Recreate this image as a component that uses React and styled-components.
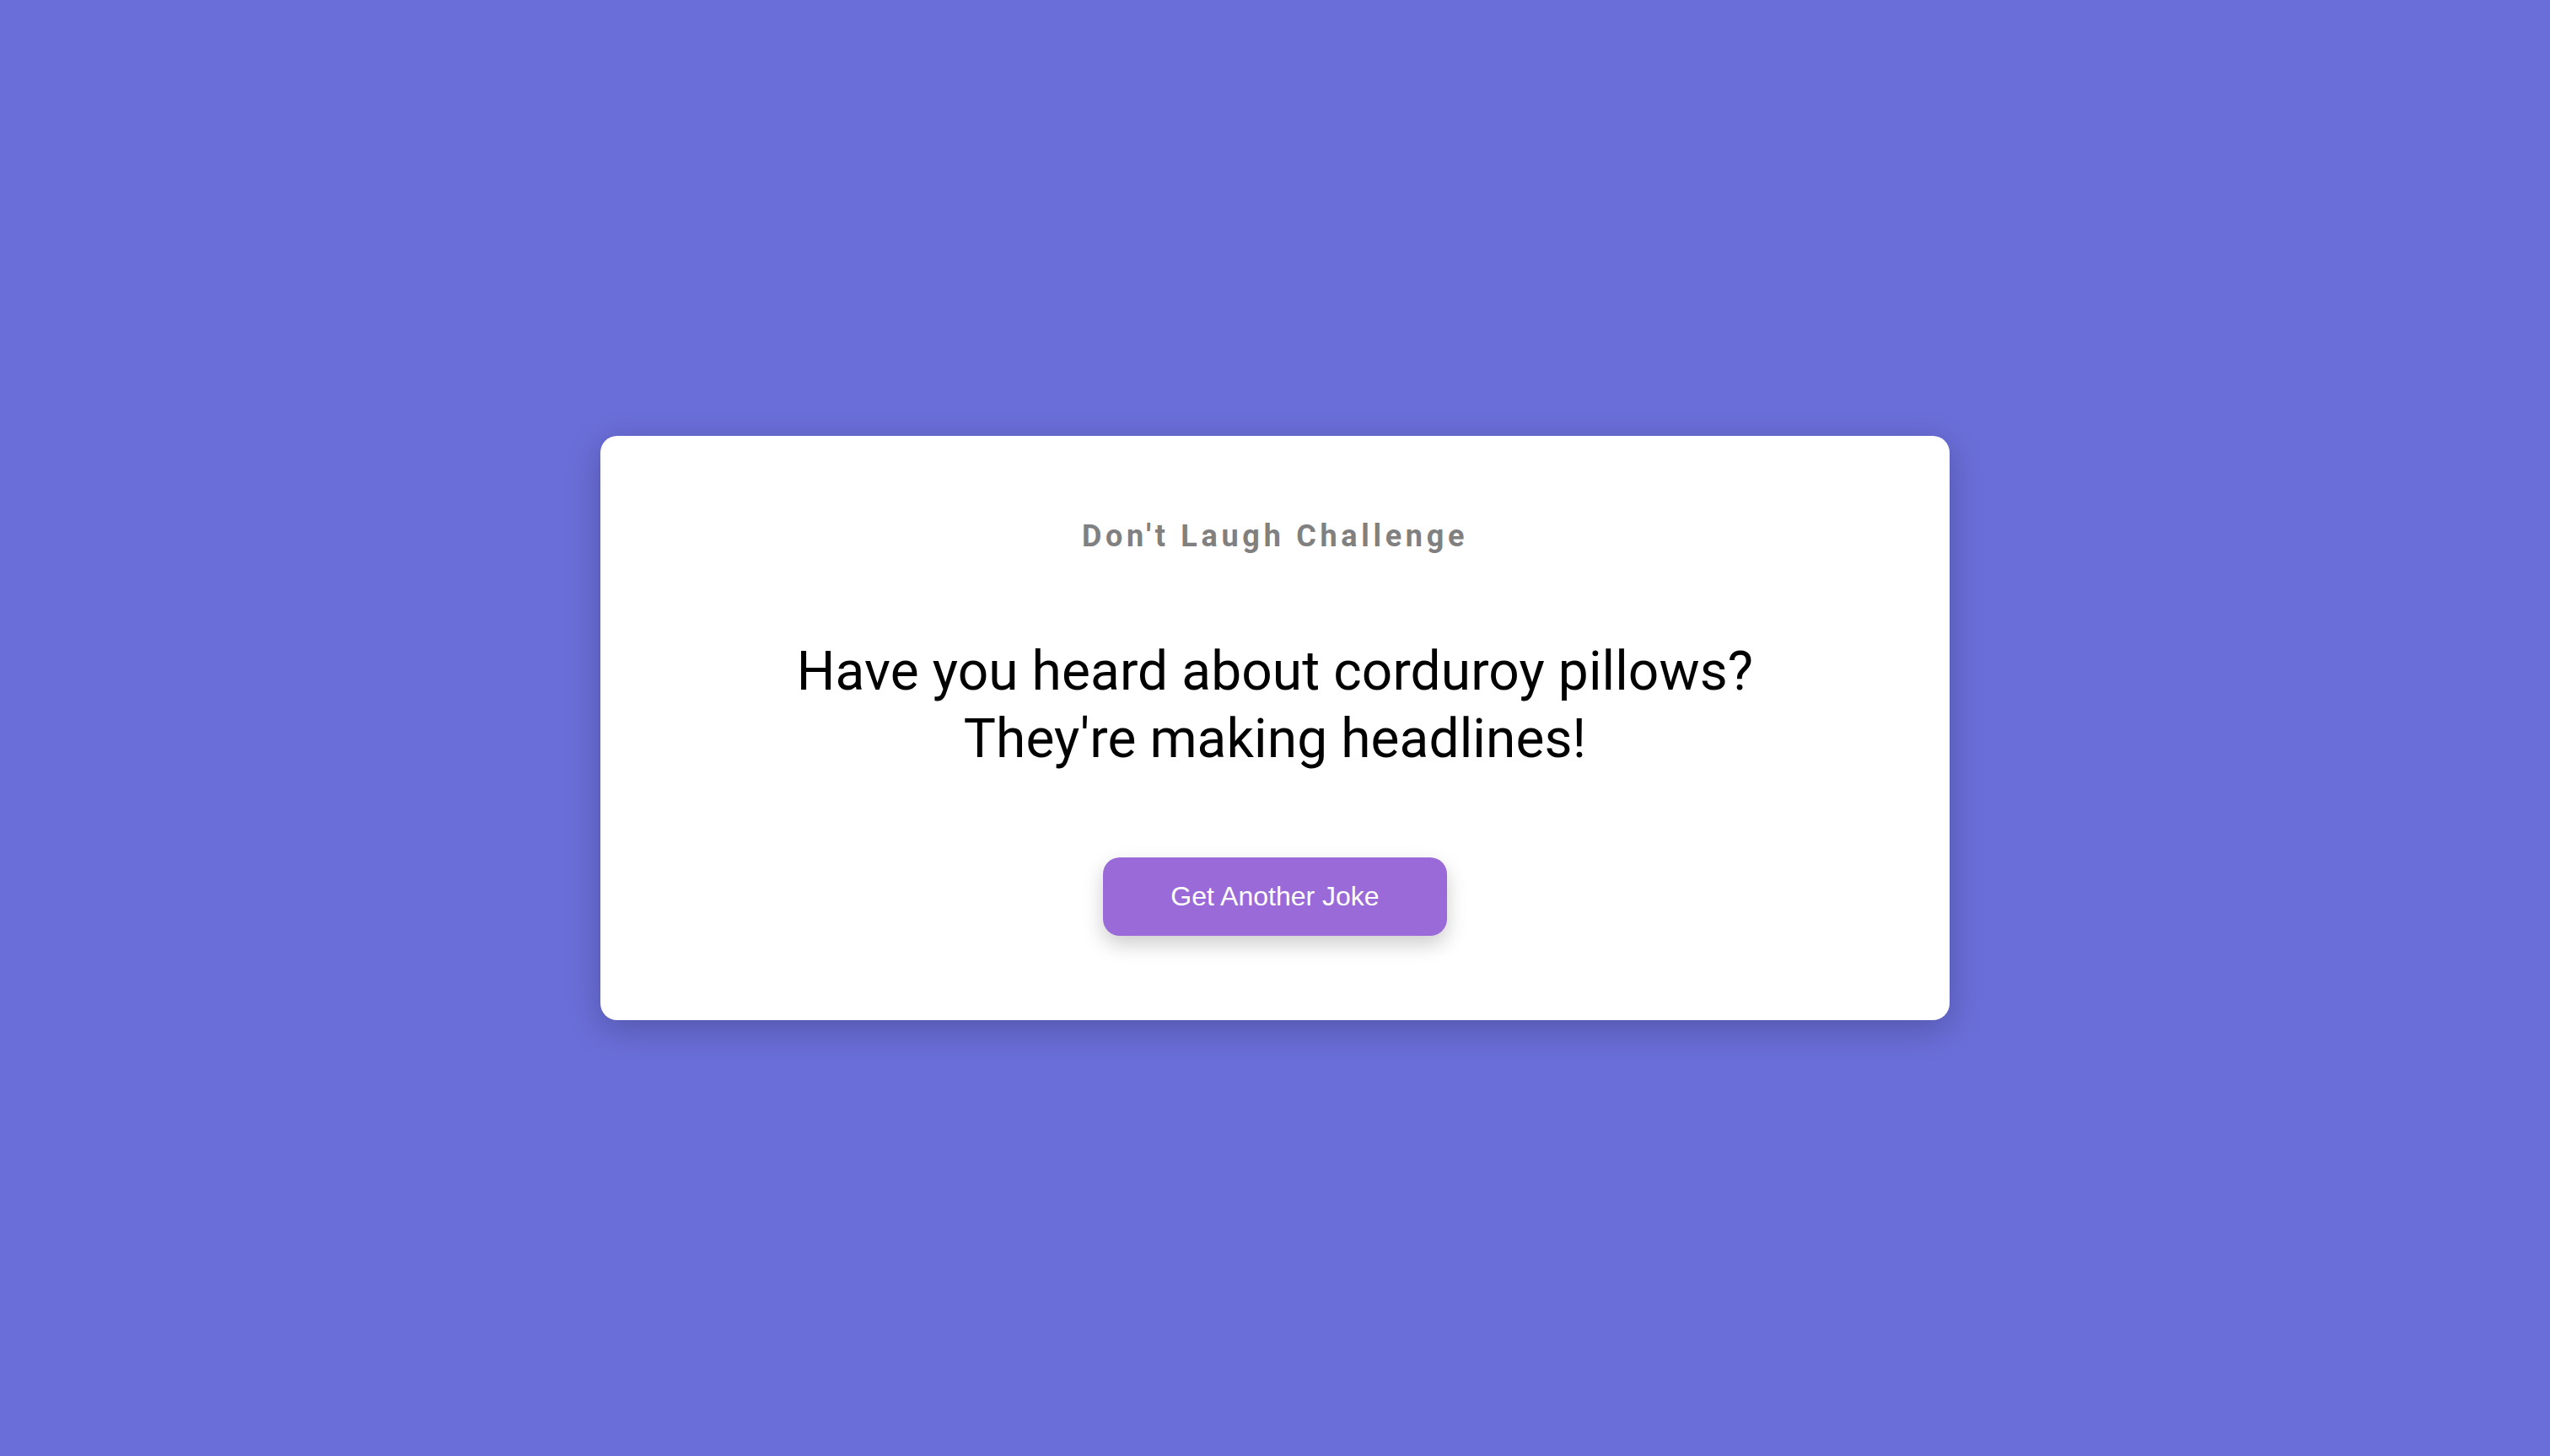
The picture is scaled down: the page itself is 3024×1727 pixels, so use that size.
import styled, { createGlobalStyle } from 'styled-components';

const GlobalStyle = createGlobalStyle`
    html, body {
        margin: 0;
        padding: 0;
    }

    body {
        background-color: #6a6ed8;
        font-family: Roboto, "Liberation Sans", sans-serif;
    }
`;

export default function App() {
    return (
        <>
            <GlobalStyle />
            <Page>
                <Card>
                    <Title>Don't Laugh Challenge</Title>
                    <Joke>
                        Have you heard about corduroy pillows?<br />
                        They're making headlines!
                    </Joke>
                    <JokeButton type="button">Get Another Joke</JokeButton>
                </Card>
            </Page>
        </>
    );
}

const Page = styled.main`
    min-height: 100vh;
    display: flex;
    align-items: center;
    justify-content: center;
`;

const Card = styled.section`
    box-sizing: border-box;
    width: 1600px;
    padding: 98px 40px 100px;
    background-color: #ffffff;
    border-radius: 20px;
    box-shadow: 0 10px 40px rgba(0, 0, 0, 0.22);
    display: flex;
    flex-direction: column;
    align-items: center;
    text-align: center;
`;

const Title = styled.h3`
    margin: 0 0 100px;
    font-family: Roboto, sans-serif;
    font-size: 36px;
    font-weight: 700;
    letter-spacing: 4.7px;
    color: #808080;
`;

const Joke = styled.div`
    margin: 0 0 100px;
    font-family: Roboto, sans-serif;
    font-size: 64px;
    line-height: 80px;
    letter-spacing: 0.1px;
    color: #000000;
`;

const JokeButton = styled.button`
    padding: 28px 80px;
    border: none;
    border-radius: 20px;
    background-color: #9a6bd8;
    color: #ffffff;
    font-family: "Liberation Sans", Arial, sans-serif;
    font-size: 32px;
    box-shadow: 0 10px 24px rgba(0, 0, 0, 0.2);
    cursor: pointer;
`;
